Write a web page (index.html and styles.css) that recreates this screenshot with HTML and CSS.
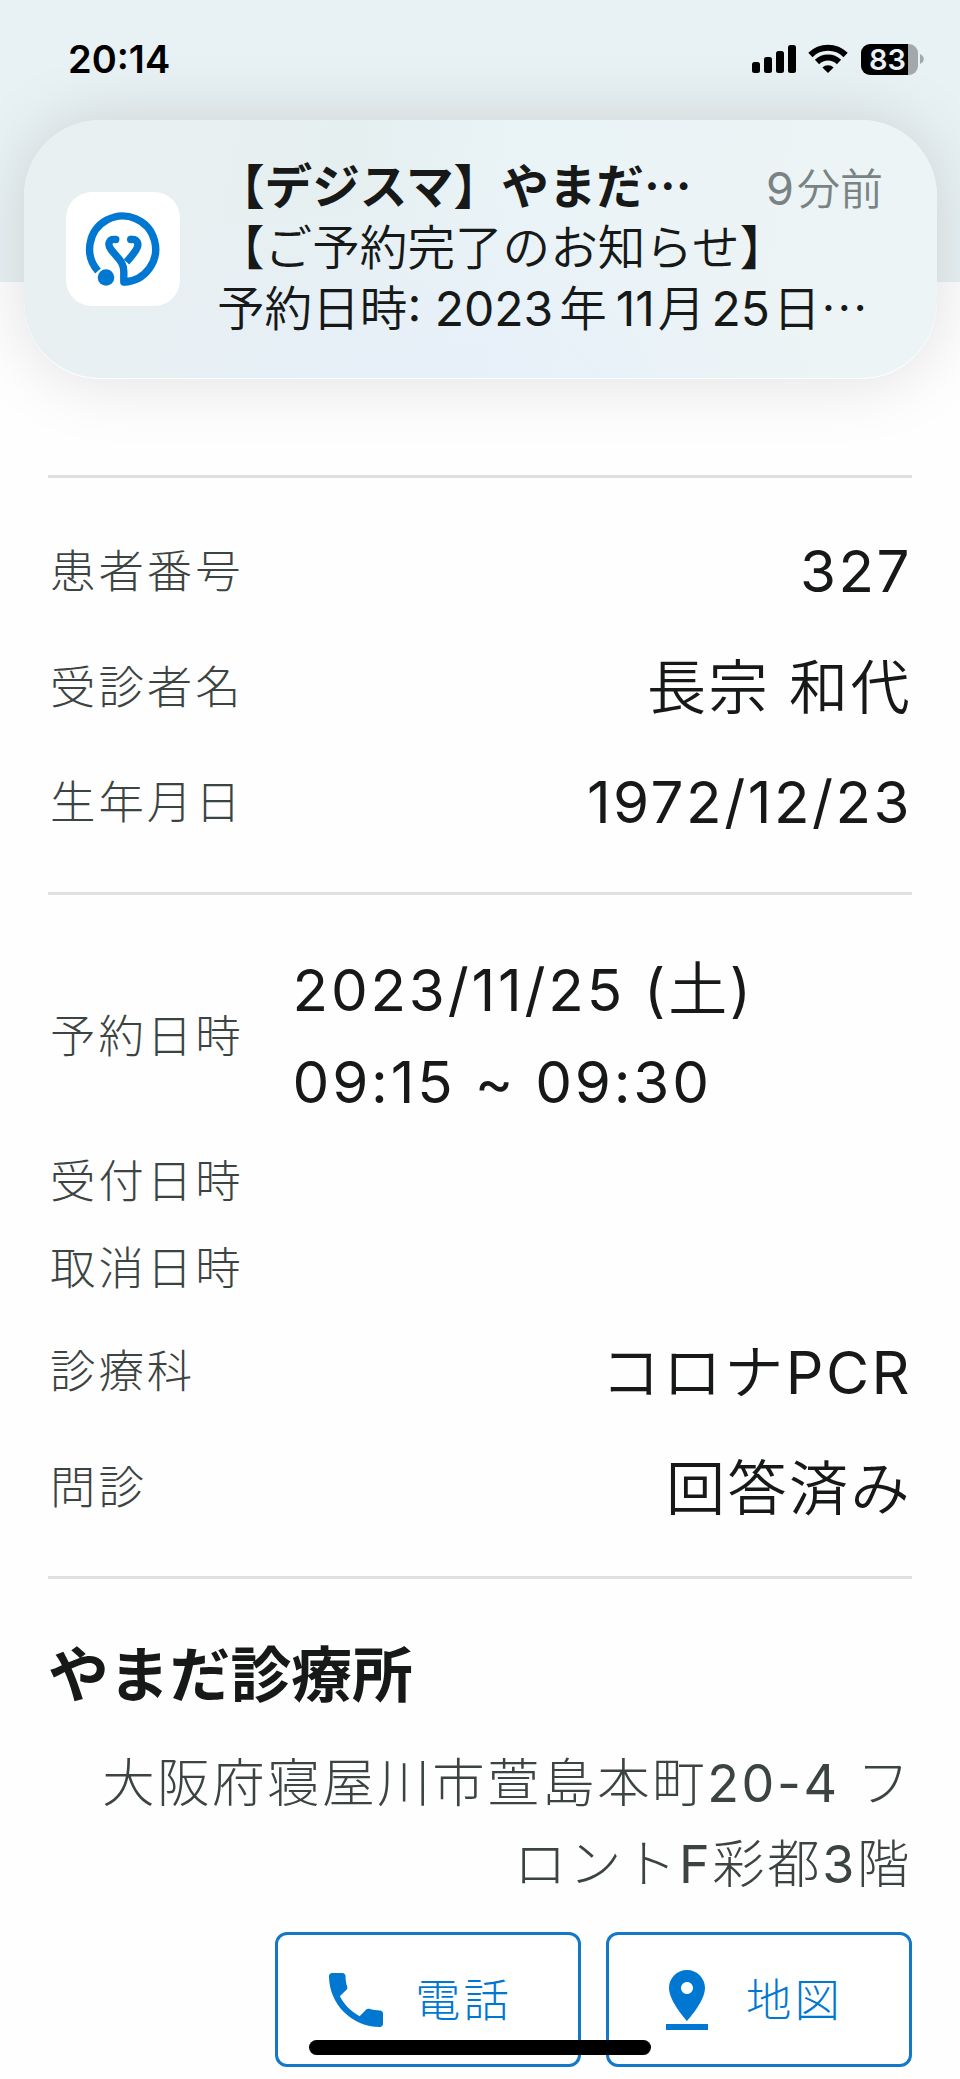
FILE: index.html
```html
<!DOCTYPE html>
<html lang="ja">
<head>
    <meta charset="UTF-8">
    <meta name="viewport" content="width=device-width, initial-scale=1.0">
    <title>予約詳細</title>
    <link rel="stylesheet" href="styles.css">
</head>
<body>

<header class="top">
    <div class="status-bar">
        <div class="clock">20:14</div>
        <div class="status-icons">
            <svg class="signal" width="44" height="28" viewBox="0 0 44 28">
                <rect x="0" y="17" width="8" height="11" rx="2.5"/>
                <rect x="12" y="12" width="8" height="16" rx="2.5"/>
                <rect x="24" y="6" width="8" height="22" rx="2.5"/>
                <rect x="36" y="0" width="8" height="28" rx="2.5"/>
            </svg>
            <svg class="wifi" width="40" height="30" viewBox="0 0 40 30">
                <g fill="none" stroke="#000" stroke-width="6">
                    <path d="M2.4 11a25 25 0 0 1 35.2 0"/>
                    <path d="M9 18a15.800 15.800 0 0 1 22 0"/>
                </g>
                <path d="M20 29l-5.600-5.500a8 8 0 0 1 11.200 0z"/>
            </svg>
            <div class="battery"><span class="battery-level">83</span></div>
            <svg class="battery-cap" width="4" height="10" viewBox="0 0 4 10"><path d="M0 0c5 2 5 8 0 10z"/></svg>
        </div>
    </div>
</header>

<div class="notification">
    <div class="app-icon">
        <svg width="114" height="114" viewBox="0 0 114 114">
            <g fill="none" stroke="#0078d2" stroke-width="7.4" stroke-linecap="round" stroke-linejoin="round">
                <path stroke-linecap="butt" d="M32 79a33 33 0 1 1 26 11"/>
                <path d="M49.700 47.500c-7-1-8.500 5-4.700 10 6 8 12.800 12 12.800 22v10.500"/>
                <path stroke-linecap="butt" d="M64.700 47.500c7-1 9 5 5.300 10.500q-4 6-9.500 12"/>
            </g>
            <circle cx="64.700" cy="47.500" r="3.700" fill="#0078d2"/>
            <circle cx="40" cy="85.500" r="10" fill="#fff"/>
            <circle cx="40" cy="85.500" r="8.300" fill="#0078d2"/>
        </svg>
    </div>
    <div class="notification-text">
        <div class="notification-head">
            <div class="notification-title">【デジスマ】やまだ<span class="dots">…</span></div>
            <div class="notification-time"><span class="num">9</span><span class="gap narrow"></span>分前</div>
        </div>
        <div class="notification-body">【ご予約完了のお知らせ】</div>
        <div class="notification-body second">予約日時<span class="num">: 2023</span><span class="gap"></span>年<span class="gap wide"></span><span class="num">11</span><span class="gap narrow"></span>月<span class="gap"></span><span class="num">25</span><span class="gap narrow"></span>日<span class="dots">…</span></div>
    </div>
</div>

<main class="content">
    <section class="block patient">
        <div class="row"><div class="label">患者番号</div><div class="value num">327</div></div>
        <div class="row"><div class="label">受診者名</div><div class="value">長宗 和代</div></div>
        <div class="row"><div class="label">生年月日</div><div class="value num">1972/12/23</div></div>
    </section>

    <section class="block reserve">
        <div class="row row-date"><div class="label">予約日時</div><div class="value date"><span class="num">2023/11/25 (</span>土<span class="num">)</span><br><span class="num">09:15 ~ 09:30</span></div></div>
        <div class="row row-small"><div class="label">受付日時</div></div>
        <div class="row row-small"><div class="label">取消日時</div></div>
        <div class="row row-low"><div class="label">診療科</div><div class="value">コロナ<span class="num">PCR</span></div></div>
        <div class="row row-low"><div class="label">問診</div><div class="value">回答済み</div></div>
    </section>

    <section class="block clinic">
        <h2 class="clinic-name">やまだ診療所</h2>
        <p class="address">大阪府寝屋川市萱島本町<span class="num">20-4</span> フ<br>ロント<span class="num">F</span>彩都<span class="num">3</span>階</p>
        <div class="buttons">
            <button class="btn">
                <svg width="72" height="72" viewBox="0 0 24 24"><path d="M6.620 10.790c1.440 2.830 3.760 5.140 6.590 6.590l2.200-2.200c.27-.27.67-.36 1.020-.24 1.120.37 2.330.57 3.570.57.55 0 1 .45 1 1V20c0 .55-.45 1-1 1-9.390 0-17-7.610-17-17 0-.55.45-1 1-1h3.500c.55 0 1 .45 1 1 0 1.250.2 2.450.57 3.570.11.35.03.74-.25 1.020l-2.200 2.200z"/></svg>
                <span>電話</span>
            </button>
            <button class="btn">
                <svg width="72" height="72" viewBox="0 0 24 24"><path d="M18 8c0-3.310-2.690-6-6-6S6 4.690 6 8c0 4.500 6 11 6 11s6-6.500 6-11zm-8 0c0-1.100.9-2 2-2s2 .9 2 2-.89 2-2 2c-1.100 0-2-.9-2-2zM5 20v2h14v-2H5z"/></svg>
                <span>地図</span>
            </button>
        </div>
    </section>
</main>

<div class="home-bar"></div>

</body>
</html>
```
FILE: styles.css
```css
* {
    box-sizing: border-box;
}
body {
    margin: 0;
    height: 2079px;
    position: relative;
    overflow: hidden;
    background: #fefefe;
    color: #161918;
    font-family: Inter, "Noto Sans CJK JP", sans-serif;
    font-weight: 350;
}
.num {
    font-weight: 400;
}

/* Status bar */
.top {
    height: 282px;
    background: #e8f1f3;
}
.status-bar {
    position: relative;
    z-index: 2;
    display: flex;
    justify-content: space-between;
    padding: 37px 36px 0 68px;
}
.clock {
    font-size: 38px;
    font-weight: 600;
    line-height: 44px;
    color: #000;
}
.status-icons {
    display: flex;
    align-items: center;
    height: 44px;
}
.wifi {
    margin-left: 12px;
}
.battery {
    width: 57px;
    height: 31px;
    margin-left: 13px;
    border-radius: 9px;
    background: linear-gradient(to right, #000 47px, #a3a9aa 47px);
}
.battery-level {
    display: block;
    padding-left: 8px;
    font-size: 29px;
    font-weight: 600;
    line-height: 32px;
    color: #e8f1f3;
}
.battery-cap {
    margin-left: 2px;
    fill: #a3a9aa;
}

/* Notification banner over the page */
.notification {
    position: absolute;
    left: 24px;
    top: 120px;
    width: 913px;
    height: 259px;
    display: flex;
    align-items: flex-start;
    padding: 33px 54px 0 42px;
    border-radius: 76px;
    background: radial-gradient(ellipse at 45% 110%, #e7f0fa, rgba(231, 240, 250, 0) 55%), linear-gradient(100deg, #e9f0f2, #e6eff0 35%, #eaf3f6 55%, #edf4f5);
    box-shadow: 0 0 70px rgba(0, 0, 0, 0.13), inset 0 -1px 0 #fff;
}
.app-icon {
    width: 114px;
    height: 114px;
    margin-top: 39px;
    border-radius: 26px;
    background: #fff;
}
.app-icon svg {
    display: block;
}
.notification-text {
    flex: 1;
    margin-left: 37px;
    line-height: 61px;
    white-space: nowrap;
}
.notification-head {
    display: flex;
    justify-content: space-between;
    height: 61px;
}
.notification-title {
    font-size: 47.600px;
    font-weight: 700;
}
.notification-time {
    padding-top: 5px;
    font-size: 43px;
    color: #7a8384;
}
.notification-time .num {
    font-size: 45px;
}
.notification-body {
    height: 59px;
    padding-top: 3px;
    font-size: 47.600px;
}
.second {
    padding-top: 2px;
}
.second .num {
    font-size: 48px;
}
.dots {
    font-family: "Noto Sans CJK JP", sans-serif;
}
.gap {
    display: inline-block;
    width: 6px;
}
.gap.narrow {
    width: 3px;
}
.gap.wide {
    width: 9px;
}

/* Reservation details */
.content {
    padding: 193px 48px 0;
}
.block {
    border-top: 3px solid #e0e0e0;
}
.patient {
    height: 417px;
    padding-top: 36px;
}
.reserve {
    height: 684px;
    padding-top: 50px;
}
.row {
    display: flex;
    justify-content: space-between;
    align-items: center;
    height: 115.500px;
}
.label {
    padding: 0 0 7px 2px;
    font-size: 45.400px;
    font-weight: 300;
    letter-spacing: 3px;
    color: #3c4442;
}
.value {
    font-size: 59px;
    letter-spacing: 2.500px;
    line-height: 91px;
}
.value.num {
    font-size: 58.300px;
    letter-spacing: 2.500px;
}
.row-date {
    justify-content: flex-start;
    height: 182px;
}
.date {
    margin-left: 49px;
}
.date .num {
    font-size: 58.300px;
    letter-spacing: 2.800px;
}
.row-small {
    height: 87px;
}
.row-small:nth-child(2) {
    margin-top: 11px;
}
.row-low .label {
    padding-bottom: 3px;
}
.row-low .value {
    padding-top: 6px;
}

/* Clinic */
.clinic {
    padding-top: 51px;
}
.clinic-name {
    margin: 0;
    font-size: 60.800px;
    font-weight: 700;
    line-height: 90px;
}
.address {
    margin: 23px 0 0;
    font-size: 52.400px;
    font-weight: 300;
    letter-spacing: 2.600px;
    line-height: 81px;
    text-align: right;
    color: #3c4442;
}
.address .num {
    font-size: 52px;
}
.buttons {
    display: flex;
    justify-content: flex-end;
    gap: 25px;
    margin-top: 27px;
}
.btn {
    display: flex;
    align-items: center;
    gap: 23px;
    width: 306px;
    height: 135px;
    padding: 0 0 0 42px;
    border: 3px solid #1478c8;
    border-radius: 12px;
    background: #fff;
    color: #0078d2;
    font-family: inherit;
    font-size: 45.400px;
    font-weight: 300;
    letter-spacing: 3px;
}
.btn svg {
    fill: #0078d2;
}
.btn span {
    padding-bottom: 6px;
}
.home-bar {
    position: absolute;
    left: 309px;
    top: 2040px;
    width: 342px;
    height: 15px;
    border-radius: 8px;
    background: #000;
}
```
